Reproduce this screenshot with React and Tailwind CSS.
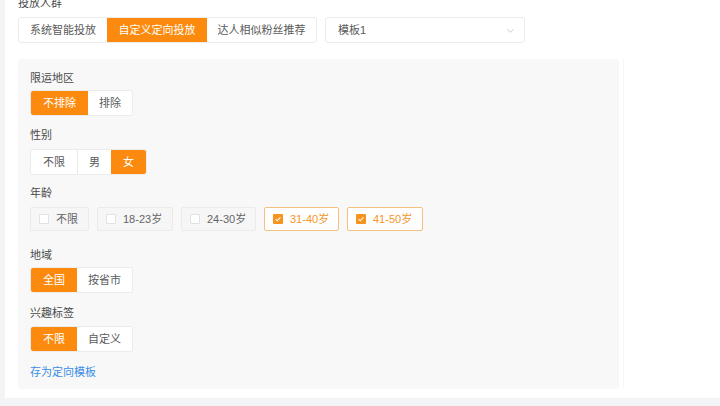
import { useState } from 'react';

const ORANGE = 'bg-[#fc8a0e]';

function Segmented({ options, value, onChange, size = 'h-[26px]' }) {
  return (
    <div className={`flex ${size} w-fit overflow-hidden rounded-[3px] border border-[#ebebeb] bg-white`}>
      {options.map((o, i) => {
        const active = o.value === value;
        return (
          <button
            key={o.value}
            type="button"
            onClick={() => onChange(o.value)}
            className={`flex h-full items-center text-[11px] ${o.w} justify-center ${
              active ? `${ORANGE} text-white` : 'text-[#5a5a5a]'
            } ${i > 0 && !active && options[i - 1].value !== value ? 'border-l border-[#ebebeb]' : ''}`}
          >
            {o.label}
          </button>
        );
      })}
    </div>
  );
}

const AGES = [
  { v: 'all', label: '不限', w: 'w-[59px]' },
  { v: '18', label: '18-23岁', w: 'w-[76px]' },
  { v: '24', label: '24-30岁', w: 'w-[75px]' },
  { v: '31', label: '31-40岁', w: 'w-[75px]' },
  { v: '41', label: '41-50岁', w: 'w-[76px]' },
];

function AgeItem({ item, checked, onToggle }) {
  return (
    <button
      type="button"
      onClick={onToggle}
      className={`flex h-[24px] items-center gap-[7px] rounded-[2px] border pl-[8px] text-[11px] ${item.w} ${
        checked ? 'border-[#f5c17f] bg-white text-[#f5941f]' : 'border-[#ebebeb] bg-[#f6f6f6] text-[#666]'
      }`}
    >
      {checked ? (
        <span className="flex h-[10px] w-[10px] items-center justify-center rounded-[1px] bg-[#f7941d]">
          <svg viewBox="0 0 10 10" className="h-[8px] w-[8px]">
            <path d="M2 5.2l2 2 4-4.2" fill="none" stroke="#fff" strokeWidth="1.3" />
          </svg>
        </span>
      ) : (
        <span className="h-[10px] w-[10px] rounded-[1px] border border-[#e2e2e2] bg-white" />
      )}
      <span>{item.label}</span>
    </button>
  );
}

function Label({ children, className = '' }) {
  return <div className={`pt-[2px] text-[11px] leading-[16px] text-[#4a4a4a] ${className}`}>{children}</div>;
}

export default function App() {
  const [mode, setMode] = useState('custom');
  const [exclude, setExclude] = useState('no');
  const [gender, setGender] = useState('f');
  const [ages, setAges] = useState(['31', '41']);
  const [region, setRegion] = useState('all');
  const [interest, setInterest] = useState('all');

  function toggleAge(v) {
    setAges((prev) => (prev.includes(v) ? prev.filter((x) => x !== v) : [...prev, v]));
  }

  return (
    <div
      className="flex h-[406px] w-[720px] overflow-hidden bg-[#f3f4f6]"
      style={{ fontFamily: '"Liberation Sans", "Noto Sans CJK SC", sans-serif' }}
    >
      <div className="ml-[5px] flex h-[398px] flex-1 flex-col bg-white pl-[13px]">
        <div className="-mt-[5px] text-[11px] leading-[16px] text-[#4a4a4a]">投放人群</div>
        <div className="mt-[6px] flex items-center gap-[8px]">
          <Segmented
            value={mode}
            onChange={setMode}
            options={[
              { value: 'sys', label: '系统智能投放', w: 'w-[88px]' },
              { value: 'custom', label: '自定义定向投放', w: 'w-[100px]' },
              { value: 'kol', label: '达人相似粉丝推荐', w: 'w-[109px]' },
            ]}
          />
          <div className="flex h-[26px] w-[200px] items-center justify-between rounded-[3px] border border-[#ebebeb] bg-white pl-[12px] pr-[8px] text-[11px] text-[#5a5a5a]">
            <span>模板1</span>
            <svg viewBox="0 0 12 12" className="h-[11px] w-[11px]">
              <path d="M2.5 4.5l3.5 3.5 3.5-3.5" fill="none" stroke="#c4c4c4" strokeWidth="1" />
            </svg>
          </div>
        </div>

        <div className="mt-[16px] flex">
          <div className="h-[330px] w-[601px] rounded-[4px] bg-[#f8f8f8] px-[12px] pt-[9px]">
            <Label>限运地区</Label>
            <div className="mt-[4px]">
              <Segmented
                value={exclude}
                onChange={setExclude}
                options={[
                  { value: 'no', label: '不排除', w: 'w-[57px]' },
                  { value: 'yes', label: '排除', w: 'w-[44px]' },
                ]}
              />
            </div>

            <Label className="mt-[9px]">性别</Label>
            <div className="mt-[6px]">
              <Segmented
                value={gender}
                onChange={setGender}
                options={[
                  { value: 'all', label: '不限', w: 'w-[46px]' },
                  { value: 'm', label: '男', w: 'w-[34px]' },
                  { value: 'f', label: '女', w: 'w-[35px]' },
                ]}
              />
            </div>

            <Label className="mt-[8px]">年龄</Label>
            <div className="mt-[6px] flex gap-[8px]">
              {AGES.map((a) => (
                <AgeItem key={a.v} item={a} checked={ages.includes(a.v)} onToggle={() => toggleAge(a.v)} />
              ))}
            </div>

            <Label className="mt-[14px]">地域</Label>
            <div className="mt-[4px]">
              <Segmented
                value={region}
                onChange={setRegion}
                options={[
                  { value: 'all', label: '全国', w: 'w-[46px]' },
                  { value: 'prov', label: '按省市', w: 'w-[55px]' },
                ]}
              />
            </div>

            <Label className="mt-[10px]">兴趣标签</Label>
            <div className="mt-[5px]">
              <Segmented
                value={interest}
                onChange={setInterest}
                options={[
                  { value: 'all', label: '不限', w: 'w-[46px]' },
                  { value: 'custom', label: '自定义', w: 'w-[55px]' },
                ]}
              />
            </div>

            <button type="button" className="mt-[12px] block text-[11px] leading-[16px] text-[#3a8ee6]">
              存为定向模板
            </button>
          </div>
          <div className="ml-[4px] h-[328px] border-l border-[#f5f5f5]" />
        </div>
      </div>
    </div>
  );
}
